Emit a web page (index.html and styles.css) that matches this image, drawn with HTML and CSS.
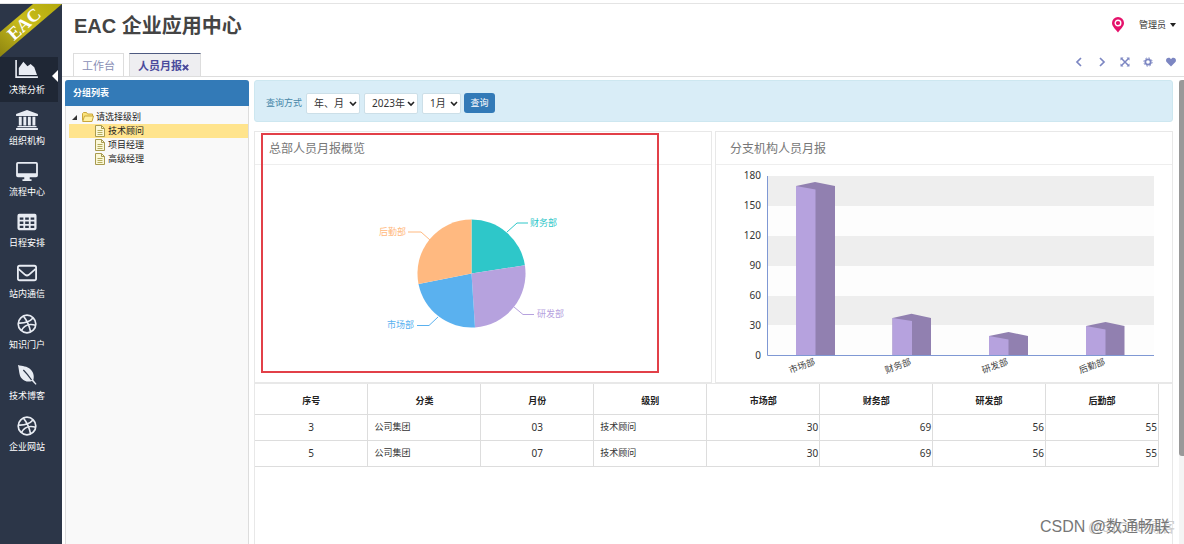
FILE: index.html
```html
<!DOCTYPE html>
<html lang="zh-CN">
<head>
<meta charset="utf-8">
<title>EAC 企业应用中心</title>
<link rel="stylesheet" href="styles.css">
</head>
<body>
<svg class="defs" aria-hidden="true">
  <defs>
    <symbol id="i-ball" viewBox="0 0 20 20"><g fill="none" stroke="currentColor" stroke-width="1.7"><circle cx="10" cy="10" r="8.8"/><path d="M6.500 2.200C10 6.500 12.300 11.500 13.600 17.800M1.300 9C7 9.300 12.500 8 16 4M4.300 16.600C7 11.300 12.500 9.500 18.700 11.200"/></g></symbol>
    <symbol id="i-page" viewBox="0 0 10 12"><path d="M.5.5h6l3 3v8h-9z" fill="#fbf8d8" stroke="#a89b50"/><path d="M6.500.5v3h3" fill="none" stroke="#a89b50"/><path d="M2.500 5.500h5M2.500 7.500h5M2.500 9.500h5" stroke="#b5ad5e"/></symbol>
    <symbol id="i-chev" viewBox="0 0 8 6"><path d="M1 1l3 3 3-3" fill="none" stroke="#222" stroke-width="1.600"/></symbol>
  </defs>
</svg>
<div class="topline"></div>
<div class="app">
  <nav class="side">
    <svg class="ribbon" viewBox="0 0 62 53" role="img" aria-label="EAC">
      <defs><linearGradient id="gold" x1="1" y1="0" x2="0" y2="1"><stop offset="0" stop-color="#b3a90c"/><stop offset=".5" stop-color="#c9bd1c"/><stop offset="1" stop-color="#8d8410"/></linearGradient></defs>
      <path d="M33 0h29L0 53V28z" fill="url(#gold)"/>
      <text class="ribbon-text" x="24" y="26" transform="rotate(-42 24 20)">EAC</text>
    </svg>
    <a class="item active" href="#"><svg class="ico" viewBox="0 0 26 22"><path d="M1 1v19h24" fill="none" stroke="currentColor" stroke-width="1.800"/><path d="M4 17.500V10l5-7 4.500 5L17 5.500l4 3.500 3 8.500z" fill="currentColor"/></svg><span>决策分析</span></a>
    <a class="item" href="#"><svg class="ico" viewBox="0 0 26 22"><path d="M13 0l12 4.500V6.500H1V4.500zM4 7.500h3.200V17H4zM9 7.500h3.200V17H9zM14 7.500h3.200V17H14zM19 7.500h3.200V17H19zM2.500 17.500h21v1.500h-21zM1 19.700h24V22H1z" fill="currentColor"/></svg><span>组织机构</span></a>
    <a class="item" href="#"><svg class="ico" viewBox="0 0 26 22"><path d="M3 1h20a2 2 0 0 1 2 2v13a2 2 0 0 1-2 2h-7v2h2v2H8v-2h2v-2H3a2 2 0 0 1-2-2V3a2 2 0 0 1 2-2zm0 2v10.500h20V3z" fill="currentColor" fill-rule="evenodd"/></svg><span>流程中心</span></a>
    <a class="item" href="#"><svg class="ico" viewBox="0 0 26 22"><path d="M4.500 2h17a2 2 0 0 1 2 2v14a2 2 0 0 1-2 2h-17a2 2 0 0 1-2-2V4a2 2 0 0 1 2-2zM5 6v2.600h4V6zm6 0v2.600h4V6zm6 0v2.600h4V6zM5 10.500v2.600h4v-2.600zm6 0v2.600h4v-2.600zm6 0v2.600h4v-2.600zM5 15v2.600h4V15zm6 0v2.600h4V15zm6 0v2.600h4V15z" fill="currentColor" fill-rule="evenodd"/></svg><span>日程安排</span></a>
    <a class="item" href="#"><svg class="ico" viewBox="0 0 26 22"><g fill="none" stroke="currentColor" stroke-width="2"><rect x="3" y="3" width="20" height="16" rx="2"/><path d="M3.500 6.500L11 13q2 1.500 4 0l7.500-6.500"/></g></svg><span>站内通信</span></a>
    <a class="item" href="#"><svg class="ico"><use href="#i-ball"/></svg><span>知识门户</span></a>
    <a class="item" href="#"><svg class="ico" viewBox="0 0 26 22"><path d="M3 0c5 1.500 10 1 14 5 3.500 3.500 4 8 3 11.500l3.500 4.500-1 .8-4-4.300c-4 1.500-8.500.5-11.500-3C4 11 4.500 5 3 0z" fill="currentColor"/><path d="M9 5.500q5 5 9 11" stroke="#2c3648" stroke-width="1.300" fill="none"/></svg><span>技术博客</span></a>
    <a class="item" href="#"><svg class="ico"><use href="#i-ball"/></svg><span>企业网站</span></a>
  </nav>
  <div class="page">
    <header class="head">
      <h1>EAC 企业应用中心</h1>
      <div class="user">
        <svg class="pin" viewBox="0 0 12 16"><path d="M6 0a6 6 0 0 1 6 6c0 3.500-3.500 6-6 9.500C3.500 12 0 9.500 0 6a6 6 0 0 1 6-6z" fill="#e5126b"/><circle cx="6" cy="6" r="2.800" fill="none" stroke="#fff" stroke-width="1.400"/></svg>
        <button class="plain" type="button">管理员<i class="caret"></i></button>
      </div>
    </header>
    <div class="tabs">
      <a class="tab" href="#">工作台</a>
      <a class="tab current" href="#">人员月报<svg class="x" viewBox="0 0 8 8"><path d="M1 1l6 6M7 1L1 7" stroke="currentColor" stroke-width="2.400"/></svg></a>
      <div class="tools">
        <button class="tool" type="button" aria-label="后退"><svg viewBox="0 0 10 10"><path d="M7 1L3 5l4 4" fill="none" stroke="currentColor" stroke-width="1.700"/></svg></button>
        <button class="tool" type="button" aria-label="前进"><svg viewBox="0 0 10 10"><path d="M3 1l4 4-4 4" fill="none" stroke="currentColor" stroke-width="1.700"/></svg></button>
        <button class="tool" type="button" aria-label="全屏"><svg viewBox="0 0 10 10"><path d="M1.500 1.500l7 7M8.500 1.500l-7 7" stroke="currentColor" stroke-width="1.500"/><path d="M.5.500h3l-3 3zM9.500.500v3l-3-3zM.5 9.500v-3l3 3zM9.500 9.500h-3l3-3z" fill="currentColor"/></svg></button>
        <button class="tool" type="button" aria-label="设置"><svg viewBox="0 0 10 10"><circle cx="5" cy="5" r="2.700" fill="none" stroke="currentColor" stroke-width="1.800"/><circle cx="5" cy="5" r="4.100" fill="none" stroke="currentColor" stroke-width="1" stroke-dasharray="1.600 1.620"/></svg></button>
        <button class="tool" type="button" aria-label="收藏"><svg viewBox="0 0 10 10"><path d="M5 9.500L.8 5.300C-.8 3.500.3.800 2.600.800 3.800.800 4.600 1.500 5 2.300 5.400 1.500 6.200.800 7.400.800 9.700.800 10.800 3.500 9.200 5.300z" fill="currentColor"/></svg></button>
      </div>
    </div>
    <div class="body">
      <aside class="groups">
        <h2>分组列表</h2>
        <ul class="tree">
          <li class="root"><i class="fold"></i><svg class="folder" viewBox="0 0 12 10"><path d="M.5 8.500v-7l1-1h3l1 1.500h5v2" fill="#fbe37a" stroke="#c9a63c"/><path d="M.7 9.500L2.500 4h9l-1.500 5.500z" fill="#fff0a0" stroke="#c9a63c"/></svg>请选择级别</li>
          <li class="leaf picked"><svg class="doc"><use href="#i-page"/></svg>技术顾问</li>
          <li class="leaf"><svg class="doc"><use href="#i-page"/></svg>项目经理</li>
          <li class="leaf"><svg class="doc"><use href="#i-page"/></svg>高级经理</li>
        </ul>
      </aside>
      <main class="main">
        <form class="query">
          <label for="mode">查询方式</label>
          <span class="pick"><select id="mode" class="w-mode"><option>年、月</option></select><svg><use href="#i-chev"/></svg></span>
          <span class="pick"><select class="w-year" aria-label="年"><option>2023年</option></select><svg><use href="#i-chev"/></svg></span>
          <span class="pick"><select class="w-month" aria-label="月"><option>1月</option></select><svg><use href="#i-chev"/></svg></span>
          <button class="go" type="button">查询</button>
        </form>
        <div class="charts">
          <section class="panel">
            <h3>总部人员月报概览</h3>
            <svg class="chart" viewBox="0 0 456 217" role="img" aria-label="总部人员月报概览">
              <path d="M216.500 108.500V54.500A54 54 0 0 1 269.900 100.300z" fill="#2ec7c9"/>
              <path d="M216.500 108.500L269.900 100.300A54 54 0 0 1 220 162.400z" fill="#b6a2de"/>
              <path d="M216.500 108.500L220 162.400A54 54 0 0 1 163.500 119z" fill="#5ab1ef"/>
              <path d="M216.500 108.500L163.500 119A54 54 0 0 1 216.500 54.500z" fill="#ffb980"/>
              <g fill="none">
                <path d="M252 67l10-9h11" stroke="#2ec7c9"/><path d="M259 142l9 7.500h11" stroke="#b6a2de"/>
                <path d="M183 152l-9 8.500h-12" stroke="#5ab1ef"/><path d="M175 75l-9-8h-13" stroke="#ffb980"/>
              </g>
              <g class="label"><text x="275" y="61" fill="#2ec7c9">财务部</text><text x="282" y="152" fill="#b6a2de">研发部</text><text x="132" y="163" fill="#5ab1ef">市场部</text><text x="124" y="70" fill="#ffb980">后勤部</text></g>
            </svg>
            <div class="mark"></div>
          </section>
          <section class="panel">
            <h3>分支机构人员月报</h3>
            <svg class="chart" viewBox="0 0 456 217" role="img" aria-label="分支机构人员月报">
              <path d="M51 11h387v30H51zM51 71h387v30H51zM51 131h387v29H51z" fill="#eee"/>
              <path d="M51 41h387v30H51zM51 101h387v30H51zM51 160h387v30H51z" fill="#fdfdfd"/>
              <g fill="#9180b0"><path d="M80 21l19-4 20 4v169H80z"/><path d="M176.500 153l19-4.300 19.500 4.300v37h-38.500z"/><path d="M273 171l19.500-4 19.500 4v19h-39z"/><path d="M370 161l19.500-4 19 4v29H370z"/></g>
              <g fill="#b6a2de"><path d="M80 21l19.500 3.500V190H80z"/><path d="M176.500 153l19.500 3v34h-19.500z"/><path d="M273 171l19.500 3.500V190H273z"/><path d="M370 161l19.500 3.500V190H370z"/></g>
              <path d="M51.500 11v179.500H438" fill="none" stroke="#7f98d4"/>
              <g class="axis"><text x="45" y="14">180</text><text x="45" y="44">150</text><text x="45" y="74">120</text><text x="45" y="104">90</text><text x="45" y="134">60</text><text x="45" y="164">30</text><text x="45" y="194">0</text></g>
              <g class="names"><text x="86" y="204" transform="rotate(-20 86 201)">市场部</text><text x="182" y="204" transform="rotate(-20 182 201)">财务部</text><text x="279" y="204" transform="rotate(-20 279 201)">研发部</text><text x="376" y="204" transform="rotate(-20 376 201)">后勤部</text></g>
            </svg>
          </section>
        </div>
        <div class="sheet">
          <table>
            <thead><tr><th>序号</th><th>分类</th><th>月份</th><th>级别</th><th>市场部</th><th>财务部</th><th>研发部</th><th>后勤部</th></tr></thead>
            <tbody>
              <tr><td class="mid">3</td><td>公司集团</td><td class="mid">03</td><td>技术顾问</td><td class="num">30</td><td class="num">69</td><td class="num">56</td><td class="num">55</td></tr>
              <tr><td class="mid">5</td><td>公司集团</td><td class="mid">07</td><td>技术顾问</td><td class="num">30</td><td class="num">69</td><td class="num">56</td><td class="num">55</td></tr>
            </tbody>
          </table>
        </div>
      </main>
      <div class="scroll"><div class="thumb"></div></div>
    </div>
  </div>
</div>
<div class="stamp back">@51CTO博客</div>
<div class="stamp">CSDN @数通畅联</div>
</body>
</html>
```
FILE: styles.css
```css
* { box-sizing: border-box; }
body {
  margin: 0;
  height: 100vh;
  overflow: hidden;
  display: flex;
  flex-direction: column;
  position: relative;
  background: #fff;
  color: #333;
  font: 9px/14px "Noto Sans", "Noto Sans CJK SC", sans-serif;
}
a { color: inherit; text-decoration: none; }
h1, h2, h3, ul { margin: 0; padding: 0; }
button, select { font: inherit; color: inherit; }
.defs { position: absolute; width: 0; height: 0; }
.topline { flex: none; height: 4px; border-bottom: 1px solid #e4e4e4; }
.app { flex: 1; display: flex; min-height: 0; }

.side {
  flex: none;
  width: 62px;
  display: flex;
  flex-direction: column;
  gap: 6px;
  background: #2c3648;
}
.ribbon { display: block; width: 62px; height: 53px; margin-bottom: -6px; }
.ribbon-text { font: bold 18px "Liberation Serif", serif; fill: #fff; text-anchor: middle; }
.item {
  position: relative;
  width: 58px;
  height: 45px;
  padding-right: 4px;
  display: flex;
  flex-direction: column;
  align-items: center;
  gap: 2px;
  color: #fff;
}
.item.active { background: #1f2735; }
.item.active::after {
  content: "";
  position: absolute;
  right: 0;
  top: 13px;
  border: 6px solid transparent;
  border-right-color: #fff;
  border-left: 0;
}
.ico { width: 26px; height: 24px; padding: 2px 0; color: #e8ecf3; }

.page { flex: 1; min-width: 0; display: flex; flex-direction: column; }
.head {
  flex: none;
  height: 49px;
  padding: 0 8px 7px 12px;
  display: flex;
  align-items: center;
  justify-content: space-between;
}
h1 { padding-top: 2px; font: bold 20px/28px "Liberation Sans", "Noto Sans CJK SC", sans-serif; color: #444; }
.user { display: flex; align-items: center; gap: 15px; }
.pin { width: 12px; height: 16px; }
.plain { display: flex; align-items: center; gap: 4px; padding: 0; border: 0; background: none; }
.caret { border: 3px solid transparent; border-top: 4px solid #222; border-bottom: 0; }

.tabs {
  flex: none;
  height: 24px;
  padding: 0 8px 0 11px;
  display: flex;
  gap: 5px;
  border-bottom: 1px solid #ddd;
  font-size: 11px;
}
.tab {
  display: flex;
  align-items: center;
  padding: 2px 8px 0;
  border: 1px solid #ddd;
  border-bottom: 0;
  color: #8a8fb5;
}
.tab.current {
  padding: 2px 11px 0 8px;
  border-top: 1px solid #4d5a80;
  background: #eeeef1;
  color: #4a4a9c;
  font-weight: bold;
}
.x { width: 7px; height: 7px; margin-top: 2px; }
.tools { margin: 3px 0 0 auto; display: flex; gap: 13px; height: 12px; }
.tool { width: 10px; height: 12px; padding: 0; border: 0; background: none; color: #7c86c2; }
.tool svg { display: block; width: 10px; height: 10px; }

.body { flex: 1; min-height: 0; display: flex; padding: 3px 0 0 3px; }
.groups {
  flex: none;
  width: 184px;
  border: 1px solid #ddd;
  border-top: 0;
  border-bottom: 0;
  border-radius: 3px 3px 0 0;
  background: #f9f9f9;
}
h2 {
  margin: 0 -1px;
  padding: 5px 8px 6px;
  border-radius: 3px 3px 0 0;
  background: #337ab7;
  color: #fff;
  font: bold 9px/15px "Noto Sans", "Noto Sans CJK SC", sans-serif;
}
.tree { list-style: none; padding: 4px 0 0 3px; color: #222; }
.tree li { display: flex; align-items: center; height: 14px; }
.root { padding-left: 3px; }
.fold { margin-right: 5px; border-left: 5px solid transparent; border-bottom: 5px solid #333; }
.folder { width: 12px; height: 10px; margin-right: 2px; }
.leaf { padding-left: 26px; }
.picked { background: #ffe48d; }
.doc { width: 10px; height: 12px; margin-right: 3px; }

.main { flex: 1; min-width: 0; margin-left: 5px; display: flex; flex-direction: column; }
.query {
  flex: none;
  height: 42px;
  padding: 4px 11px 0;
  display: flex;
  align-items: center;
  border: 1px solid #cde7f0;
  border-radius: 3px;
  background: #d9edf7;
  color: #4686a8;
}
.pick { position: relative; display: flex; margin-left: 4px; }
.pick svg { position: absolute; right: 3px; top: 8px; width: 8px; height: 6px; pointer-events: none; }
select {
  height: 21px;
  padding: 0 0 0 7px;
  border: 1px solid #ccdfe8;
  border-radius: 2px;
  background: #fff;
  color: #333;
  font-size: 10px;
  appearance: none;
}
.w-mode { width: 54px; }
.w-year { width: 54px; }
.w-month { width: 39px; }
.go {
  width: 31px;
  height: 20px;
  margin-left: 3px;
  padding: 0;
  border: 0;
  border-radius: 3px;
  background: #337ab7;
  color: #fff;
}
.charts { flex: none; display: grid; grid-template-columns: 1fr 1fr; gap: 3px; margin-top: 9px; }
.panel { position: relative; border: 1px solid #e8e8e8; }
h3 {
  padding: 7px 14px 5px;
  border-bottom: 1px solid #eee;
  font: 12px/20px "Noto Sans", "Noto Sans CJK SC", sans-serif;
  color: #777;
}
.chart { display: block; width: 100%; height: 217px; }
.label, .names { font-size: 9px; }
.axis { font-size: 10px; text-anchor: end; fill: #333; }
.names { text-anchor: middle; fill: #444; }
.mark { position: absolute; inset: 1px 52px 9px 6px; border: 2px solid #e24048; }

.sheet { flex: 1; padding-right: 13px; border: 1px solid #e8e8e8; border-bottom: 0; }
table { width: 100%; table-layout: fixed; border-collapse: collapse; color: #333; }
th, td { height: 26px; padding: 0 6px; border: 1px solid #ddd; border-width: 0 1px 1px 0; }
th { height: 30px; padding-top: 4px; color: #222; }
.mid { text-align: center; font-size: 10px; }
.num { text-align: right; padding-right: 1px; font-size: 10px; }
.scroll { flex: none; width: 5px; margin-left: 6px; background: #f4f4f4; }
.thumb { height: 81%; background: #999; border-radius: 3px 0 0 3px; }

.stamp {
  position: absolute;
  right: 14px;
  bottom: 6px;
  font: 16px/22px "Liberation Sans", "Noto Sans CJK SC", sans-serif;
  color: #777;
}
.stamp.back { right: 9px; font-size: 14px; color: #ccc; }
```
